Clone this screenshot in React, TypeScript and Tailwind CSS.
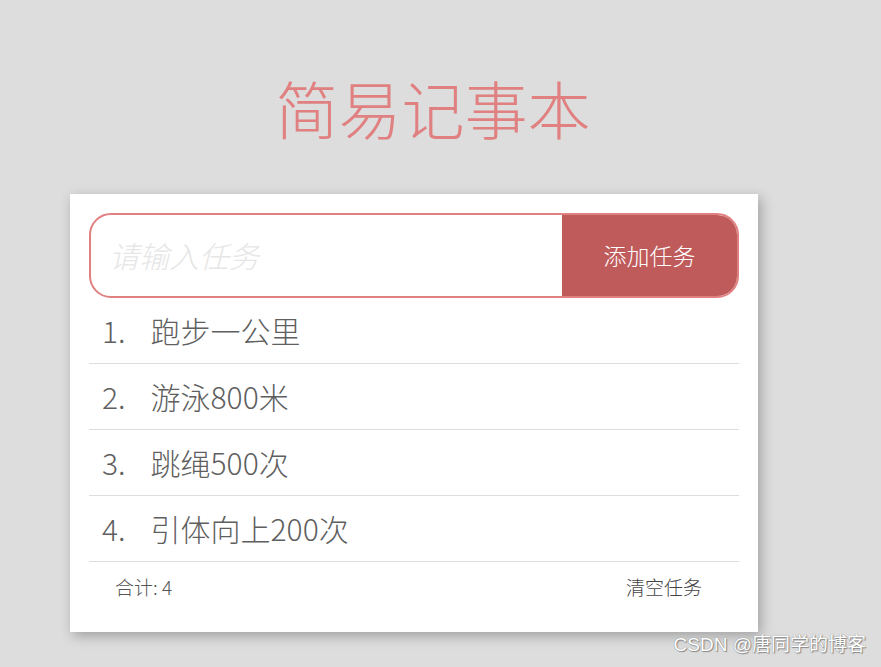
import React, { useState } from "react";

const font = { fontFamily: '"Noto Sans CJK SC", "Noto Sans", sans-serif' };

export default function App() {
  const [tasks, setTasks] = useState(["跑步一公里", "游泳800米", "跳绳500次", "引体向上200次"]);
  const [text, setText] = useState("");

  const add = () => {
    if (!text.trim()) return;
    setTasks([...tasks, text.trim()]);
    setText("");
  };

  return (
    <div className="relative min-h-[667px] w-[881px] bg-[#dddddd] overflow-hidden" style={font}>
      <h1 className="pt-[75px] pr-[15px] text-center text-[63px] leading-none font-light text-[#e08080]">
        简易记事本
      </h1>

      <div className="mt-[56px] ml-[70px] w-[688px] bg-white p-[19px] pb-[20px] shadow-[3px_4px_12px_rgba(0,0,0,0.28)]">
        <div className="flex h-[85px] overflow-hidden rounded-[22px] border-2 border-[#e08080]">
          <input
            value={text}
            onChange={(e) => setText(e.target.value)}
            placeholder="请输入任务"
            className="flex-1 min-w-0 pl-[18px] text-[30px] font-light italic text-[#555] outline-none placeholder:text-[#e6e6e6]"
            style={font}
          />
          <button
            onClick={add}
            className="w-[175px] bg-[#c05b5b] text-[23px] font-light text-white"
            style={font}
          >
            添加任务
          </button>
        </div>

        <ol>
          {tasks.map((t, i) => (
            <li
              key={i}
              className="flex h-[66px] items-center border-b border-[#dddddd] pl-[13px] text-[30px] font-light text-[#5f5f5f]"
            >
              <span>{i + 1}.</span>
              <span className="ml-[25px]">{t}</span>
            </li>
          ))}
        </ol>

        <div className="flex h-[50px] items-center justify-between pl-[26px] pr-[37px] font-light">
          <span className="text-[19px] text-[#555]">合计: {tasks.length}</span>
          <button onClick={() => setTasks([])} className="text-[19px] text-[#444]" style={font}>
            清空任务
          </button>
        </div>
      </div>

      <div
        className="absolute right-[15px] bottom-[8px] text-[19px] text-white [text-shadow:0_0_1px_#777,1px_1px_1px_#888]"
        style={{ fontFamily: '"Liberation Sans", "Noto Sans CJK SC", sans-serif' }}
      >
        CSDN @唐同学的博客
      </div>
    </div>
  );
}
